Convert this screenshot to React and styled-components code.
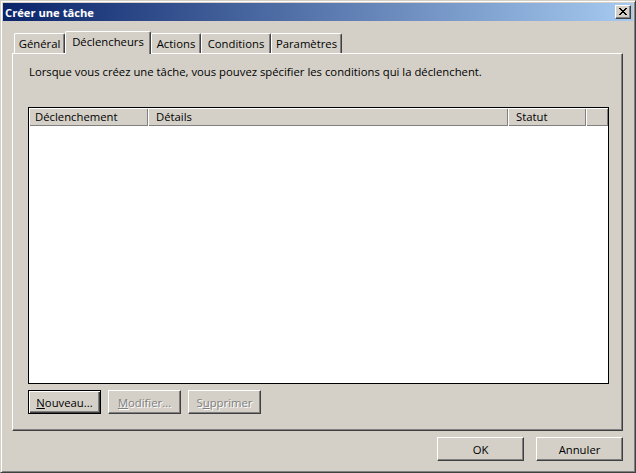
import React from "react";
import styled, { createGlobalStyle } from "styled-components";

const FACE = "#d4d0c8";
const UI_FONT = `"Open Sans", "Noto Sans", sans-serif`;

const GlobalStyle = createGlobalStyle`
  html, body {
    margin: 0;
    padding: 0;
    background: ${FACE};
  }
  body {
    font-family: ${UI_FONT};
    font-size: 11.3px;
    color: #000;
  }
`;

const Window = styled.div`
  width: 636px;
  height: 473px;
  box-sizing: border-box;
  background: ${FACE};
  border: 1px solid;
  border-color: ${FACE} #404040 #404040 ${FACE};
  box-shadow: inset 1px 1px #fff, inset -1px -1px #808080;
  padding: 2px;
  display: flex;
  flex-direction: column;
`;

const TitleBar = styled.div`
  height: 18px;
  flex: none;
  display: flex;
  align-items: center;
  justify-content: space-between;
  padding: 0 2px;
  background: linear-gradient(to right, #0a246a, #a6caf0);
`;

const Title = styled.span`
  color: #fff;
  font-weight: 700;
  font-size: 11.2px;
  line-height: 15px;
`;

const CloseButton = styled.div`
  width: 16px;
  height: 14px;
  box-sizing: border-box;
  background: ${FACE};
  border: 1px solid;
  border-color: #fff #404040 #404040 #fff;
  box-shadow: inset -1px -1px #808080;
  display: flex;
  align-items: center;
  justify-content: center;
  padding: 0 1px 1px 0;
  svg {
    display: block;
  }
`;

const Body = styled.div`
  flex: 1;
  display: flex;
  flex-direction: column;
  padding: 10px 10px 0 9px;
`;

const TabStrip = styled.div`
  display: flex;
  align-items: flex-end;
  height: 23px;
  margin: 0 0 -1px 2px;
  position: relative;
  z-index: 1;
`;

const Tab = styled.div`
  box-sizing: border-box;
  width: ${(p) => p.$w}px;
  height: ${(p) => (p.$active ? 23 : 20)}px;
  margin-bottom: ${(p) => (p.$active ? 0 : 1)}px;
  background: ${FACE};
  border-top: 1px solid #fff;
  border-left: 1px solid #fff;
  border-right: 1px solid #404040;
  box-shadow: inset -1px 0 #808080;
  border-radius: 2px 2px 0 0;
  padding-top: 2px;
  text-align: center;
  line-height: 15px;
  white-space: nowrap;
`;

const Panel = styled.div`
  height: 378px;
  box-sizing: border-box;
  border: 1px solid;
  border-color: #fff #404040 #404040 #fff;
  box-shadow: inset -1px -1px #808080;
  padding: 10px 13px 0 15px;
  display: flex;
  flex-direction: column;
`;

const Intro = styled.p`
  margin: 0 0 0 1px;
  line-height: 15px;
  white-space: nowrap;
`;

const ListView = styled.div`
  margin-top: 28px;
  height: 277px;
  box-sizing: border-box;
  border: 1px solid #000;
  background: #fff;
  display: flex;
  flex-direction: column;
`;

const HeaderRow = styled.div`
  display: flex;
  height: 18px;
  flex: none;
  background: ${FACE};
`;

const HeaderCell = styled.div`
  box-sizing: border-box;
  width: ${(p) => (p.$w ? `${p.$w}px` : "auto")};
  flex: ${(p) => (p.$w ? "none" : "1")};
  height: 18px;
  box-shadow: inset 1px 1px #fff, inset -1px -1px #808080;
  padding-left: ${(p) => p.$pad || 6}px;
  line-height: 17px;
  white-space: nowrap;
`;

const ButtonRow = styled.div`
  display: flex;
  gap: 7px;
  margin-top: 6px;
`;

const Footer = styled.div`
  display: flex;
  justify-content: flex-end;
  gap: 12px;
  padding-top: 6px;
`;

const Button = styled.button`
  width: ${(p) => p.$w}px;
  height: ${(p) => p.$h}px;
  box-sizing: border-box;
  margin: 0;
  padding: 0;
  background: ${FACE};
  border: 1px solid;
  border-color: ${(p) => (p.$default ? "#000" : "#fff #404040 #404040 #fff")};
  box-shadow: ${(p) =>
    p.$default
      ? "inset 1px 1px #fff, inset -1px -1px #404040, inset -2px -2px #808080"
      : "inset -1px -1px #808080"};
  font-family: ${UI_FONT};
  font-size: 11.3px;
  line-height: 15px;
  color: #000;
  &:disabled {
    color: #808080;
    text-shadow: 1px 1px #fff;
  }
  u {
    text-decoration-thickness: 1px;
    text-underline-offset: 1px;
  }
`;

const CloseGlyph = () => (
  <svg width="8" height="7" viewBox="0 0 8 7" shapeRendering="crispEdges">
    <path
      fill="#000"
      d="M0 0h2v1H0zM6 0h2v1H6zM1 1h2v1H1zM5 1h2v1H5zM2 2h4v1H2zM3 3h2v1H3zM2 4h4v1H2zM1 5h2v1H1zM5 5h2v1H5zM0 6h2v1H0zM6 6h2v1H6z"
    />
  </svg>
);

const tabs = [
  { label: "Général", w: 51 },
  { label: "Déclencheurs", w: 86, active: true },
  { label: "Actions", w: 50 },
  { label: "Conditions", w: 70 },
  { label: "Paramètres", w: 71 },
];

export default function App() {
  return (
    <>
      <GlobalStyle />
      <Window>
        <TitleBar>
          <Title>Créer une tâche</Title>
          <CloseButton>
            <CloseGlyph />
          </CloseButton>
        </TitleBar>
        <Body>
          <TabStrip>
            {tabs.map((t) => (
              <Tab key={t.label} $w={t.w} $active={t.active}>
                {t.label}
              </Tab>
            ))}
          </TabStrip>
          <Panel>
            <Intro>
              Lorsque vous créez une tâche, vous pouvez spécifier les conditions
              qui la déclenchent.
            </Intro>
            <ListView>
              <HeaderRow>
                <HeaderCell $w={119}>Déclenchement</HeaderCell>
                <HeaderCell $w={360} $pad={8}>Détails</HeaderCell>
                <HeaderCell $w={78} $pad={8}>Statut</HeaderCell>
                <HeaderCell />
              </HeaderRow>
            </ListView>
            <ButtonRow>
              <Button $w={73} $h={24} $default>
                <u>N</u>ouveau...
              </Button>
              <Button $w={73} $h={24} disabled>
                <u>M</u>odifier...
              </Button>
              <Button $w={73} $h={24} disabled>
                S<u>u</u>pprimer
              </Button>
            </ButtonRow>
          </Panel>
          <Footer>
            <Button $w={87} $h={24}>OK</Button>
            <Button $w={87} $h={24}>Annuler</Button>
          </Footer>
        </Body>
      </Window>
    </>
  );
}
